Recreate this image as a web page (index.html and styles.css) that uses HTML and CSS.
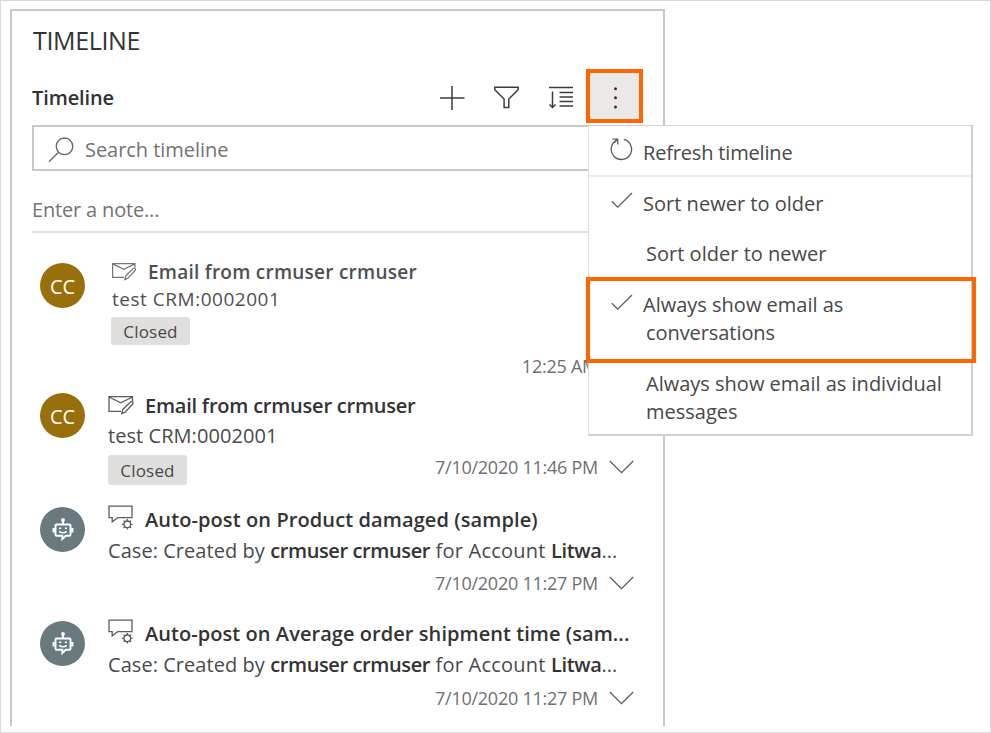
FILE: index.html
```html
<!DOCTYPE html>
<html lang="en">
<head>
<meta charset="utf-8">
<title>Timeline</title>
<link rel="stylesheet" href="styles.css">
</head>
<body>
<svg width="0" height="0" class="defs" aria-hidden="true">
  <symbol id="mail" viewBox="0 0 26 20">
    <path d="M13 16.3H1V1.7h23.5V6M1 2l11.8 5.8L24.5 2"/>
    <path d="M13.8 18.6l1.2-4.4 7.8-7.4q1.6-.8 2.2.6.3 1-.5 1.8l-7.4 8z"/>
  </symbol>
  <symbol id="post" viewBox="0 0 26 26">
    <path d="M9.5 12.7L4.2 17v-4.300H1V1.200h23v11.500H9.500"/>
    <circle cx="19.300" cy="19.300" r="3.300"/>
    <path d="M19.300 16v-2M19.300 22.600v2M16 19.300h-2M22.600 19.300h2M17 17l-1.400-1.400M21.600 17l1.400-1.400M17 21.600l-1.400 1.400M21.600 21.600l1.400 1.400"/>
  </symbol>
  <symbol id="bot" viewBox="0 0 22 26">
    <circle cx="11" cy="3" r="1.900" fill="#fff" stroke="none"/>
    <path d="M11 4v3.500M4.500 7.500h13a1 1 0 0 1 1 1v9.300a1 1 0 0 1-1 1h-3.700L10.300 22v-3.200H4.500a1 1 0 0 1-1-1V8.500a1 1 0 0 1 1-1zM1.500 11v4.500M20.500 11v4.500"/>
    <path d="M7 11.300h2.200M12.800 11.300H15M7.200 14.300q3.800 3 7.600 0" stroke-width="1.600"/>
  </symbol>
  <symbol id="chev" viewBox="0 0 25 14"><path d="M.8 1l11.700 11.600L24.200 1"/></symbol>
  <symbol id="check" viewBox="0 0 22 17"><path d="M.8 9.200l5.900 5.900L21 1"/></symbol>
</svg>
<div class="page">
  <section class="panel">
    <h1 class="heading">TIMELINE</h1>
    <header class="toolbar">
      <h2 class="subheading">Timeline</h2>
      <button class="tool"><svg width="55" height="46" viewBox="0 0 55 46"><path d="M31 13v24M19 25h24.500"/></svg></button>
      <button class="tool"><svg width="55" height="46" viewBox="0 0 55 46"><path d="M18.800 14.200h23.400v2.500L32.800 26v8.500h-4.700V26l-9.300-9.300z"/></svg></button>
      <button class="tool"><svg width="55" height="46" viewBox="0 0 55 46"><path d="M18 14.500h24M28.500 19.400H42M28.500 23.900H42M28.500 28.400H42M28.500 33H42M21.500 18.500v15.500M18.500 31.500l3 3 3-3"/></svg></button>
      <button class="tool more"><svg width="49" height="46" viewBox="0 0 49 46"><circle cx="25.500" cy="15.700" r="1.500"/><circle cx="25.500" cy="24.800" r="1.500"/><circle cx="25.500" cy="33.900" r="1.500"/></svg></button>
    </header>
    <div class="search">
      <svg width="26" height="26" viewBox="0 0 26 26"><circle cx="16.500" cy="9.300" r="8.300"/><path d="M10.500 15.200L1 24.700"/></svg>
      <span>Search timeline</span>
    </div>
    <div class="note"><span>Enter a note...</span></div>

    <ul class="feed">
      <li class="item first">
        <div class="avatar person">CC</div>
        <div class="body">
          <h3 class="title"><svg class="mail"><use href="#mail"/></svg><span>Email from crmuser crmuser</span></h3>
          <p class="text">test CRM:0002001</p>
          <span class="tag">Closed</span>
          <p class="meta">12:25 AM</p>
        </div>
      </li>
      <li class="item second">
        <div class="avatar person">CC</div>
        <div class="body">
          <h3 class="title"><svg class="mail"><use href="#mail"/></svg><span>Email from crmuser crmuser</span></h3>
          <p class="text">test CRM:0002001</p>
          <div class="row"><span class="tag">Closed</span><p class="meta">7/10/2020 11:46 PM <svg class="chev"><use href="#chev"/></svg></p></div>
        </div>
      </li>
      <li class="item auto">
        <div class="avatar robot"><svg class="bot"><use href="#bot"/></svg></div>
        <div class="body">
          <h3 class="title"><svg class="post"><use href="#post"/></svg><span>Auto-post on Product damaged (sample)</span></h3>
          <p class="text">Case: Created by <b>crmuser crmuser</b><span class="mid"> for Account </span><b>Litwa</b>...</p>
          <p class="meta">7/10/2020 11:27 PM <svg class="chev"><use href="#chev"/></svg></p>
        </div>
      </li>
      <li class="item auto last">
        <div class="avatar robot"><svg class="bot"><use href="#bot"/></svg></div>
        <div class="body">
          <h3 class="title"><svg class="post"><use href="#post"/></svg><span>Auto-post on Average order shipment time (sam...</span></h3>
          <p class="text">Case: Created by <b>crmuser crmuser</b><span class="mid"> for Account </span><b>Litwa</b>...</p>
          <p class="meta">7/10/2020 11:27 PM <svg class="chev"><use href="#chev"/></svg></p>
        </div>
      </li>
    </ul>
  </section>

  <ul class="menu">
    <li class="refresh"><svg width="24" height="24" viewBox="0 0 24 24"><path d="M14.800 2.400A10.200 10.200 0 1 1 7.400 3.400M3.500 2.200h5.200v5.200M8.500 2.400L5.500 5.500"/></svg><span>Refresh timeline</span></li>
    <li class="newer"><svg class="check"><use href="#check"/></svg><span>Sort newer to older</span></li>
    <li class="older"><span>Sort older to newer</span></li>
    <li class="conversations"><svg class="check"><use href="#check"/></svg><span>Always show email as<br><span class="wrap">conversations</span></span></li>
    <li class="individual"><span>Always show email as individual<br>messages</span></li>
  </ul>
</div>
</body>
</html>
```
FILE: styles.css
```css
* { box-sizing: border-box; margin: 0; padding: 0; }
body { background: #fff; color: #333; font: 20px/28px "Open Sans", "Noto Sans", sans-serif; }
ul { list-style: none; }
svg { display: block; flex: none; fill: none; stroke: #5c5c5c; stroke-width: 1.3; }
.defs { position: absolute; }

.page { position: relative; width: 991px; height: 733px; padding: 8px 9px; border: 1px solid #d9d9d9; overflow: hidden; }
.panel { width: 655px; height: 717px; padding: 12px 21px 0 20px; border: 2px solid #c8c8c8; border-bottom: 0; }

.heading { padding-left: 1px; font-size: 25px; line-height: 34px; font-weight: 400; letter-spacing: -.36px; }
.toolbar { display: flex; height: 54px; margin: 12px -1px 2px 0; }
.subheading { flex: 1; padding-top: 15px; font-size: 20px; font-weight: 600; letter-spacing: -.11px; }
.tool { display: flex; align-items: center; width: 55px; border: 0; background: none; }
.tool svg { stroke: #3c3b40; stroke-width: 1.5; }
.more { width: 57px; border: 4px solid #f60; background: #ebe9e8; }
.more svg { fill: #333; stroke: none; }

.search { display: flex; height: 46px; padding: 9px 14px 0; border: 2px solid #c8c8c8; color: #737373; }
.search svg { margin: 1px 11px 0 0; stroke: #666; }
.search span { letter-spacing: -.04px; }
.note { height: 62px; padding-top: 25px; border-bottom: 2px solid #e1e1e1; color: #737373; letter-spacing: -.17px; }

.feed { padding-top: 30px; }
.item { display: flex; height: 114px; padding-left: 8px; }
.avatar { display: flex; align-items: center; justify-content: center; flex: none; width: 45px; height: 45px; margin-right: 23px; border-radius: 50%; color: #fff; }
.person { background: #986f0b; font-weight: 500; letter-spacing: -.2px; padding-top: 2px; }
.robot { background: #69797e; }
.bot { width: 22px; height: 26px; stroke: #fff; stroke-width: 1.9; }
.body { flex: 1; min-width: 0; margin-top: -2px; }
.title { display: flex; height: 28px; font-size: 20px; font-weight: 600; white-space: nowrap; letter-spacing: .06px; }
.auto:not(.last) .title { letter-spacing: .1px; }
.title span { margin-top: 1px; }
.mail { width: 26px; height: 20px; margin: 4px 11px 0 0; }
.post { width: 26px; height: 26px; margin: 0 11px 0 0; }
.text { margin-top: 4px; color: #4a4a4a; white-space: nowrap; letter-spacing: .05px; }
.text b { color: #333; font-weight: 600; letter-spacing: -.38px; }
.mid { letter-spacing: .22px; }
.tag { display: block; width: 79px; height: 30px; border-radius: 3px; background: #e1dfdd; color: #484848; font-size: 17px; line-height: 31px; text-align: center; letter-spacing: .2px; }
.meta { display: flex; align-items: center; justify-content: flex-end; margin-top: 6px; padding-right: 8px; color: #6f6f6f; font-size: 18px; line-height: 24px; letter-spacing: -.25px; }
.chev { width: 25px; height: 14px; margin-left: 11px; }
.row { display: flex; justify-content: space-between; margin-top: 5px; }
.row .meta { align-self: flex-start; margin-top: 0; }

.first { height: 130px; }
.first .body { margin-top: -5px; padding-left: 3px; }
.first .title, .first .text { font-size: 19px; line-height: 26px; color: #505050; }
.first .title { height: 26px; letter-spacing: .25px; }
.first .mail { height: 19px; margin-top: 4px; stroke: #777; }
.first .text { margin-top: 2px; padding-left: 1px; letter-spacing: .52px; }
.first .tag { height: 28px; margin-top: 5px; line-height: 29px; }
.first .meta { margin-top: 9px; padding-right: 44px; }
.second .title { letter-spacing: -.22px; }
.second .text { margin-top: 3px; letter-spacing: .06px; }
.last .meta { margin-top: 7px; }

.menu { position: absolute; left: 587px; top: 124px; width: 385px; height: 311px; border: 1px solid #d0d0d0; border-left-color: #ddd; border-width: 1px 2px 2px 1px; background: #fff; color: #484848; }
.menu li { display: flex; height: 50px; padding: 13px 0 0 20px; }
.menu .refresh { height: 51px; border-bottom: 2px solid #ececec; letter-spacing: -.17px; }
.refresh svg { margin: -2px 10px 0 0; }
.check { width: 22px; height: 17px; margin: 2px 10px 0 2px; }
.menu .newer { letter-spacing: .02px; }
.menu .older { padding-left: 57px; letter-spacing: .02px; }
.menu .conversations { width: 390px; height: 86px; margin-left: -3px; padding: 10px 0 0 21px; border: 4px solid #f60; }
.conversations .check { margin: 3px 10px 0 0; }
.conversations .wrap { margin-left: 3px; letter-spacing: -.07px; }
.menu .individual { height: auto; padding: 7px 0 0 57px; white-space: nowrap; }
```
